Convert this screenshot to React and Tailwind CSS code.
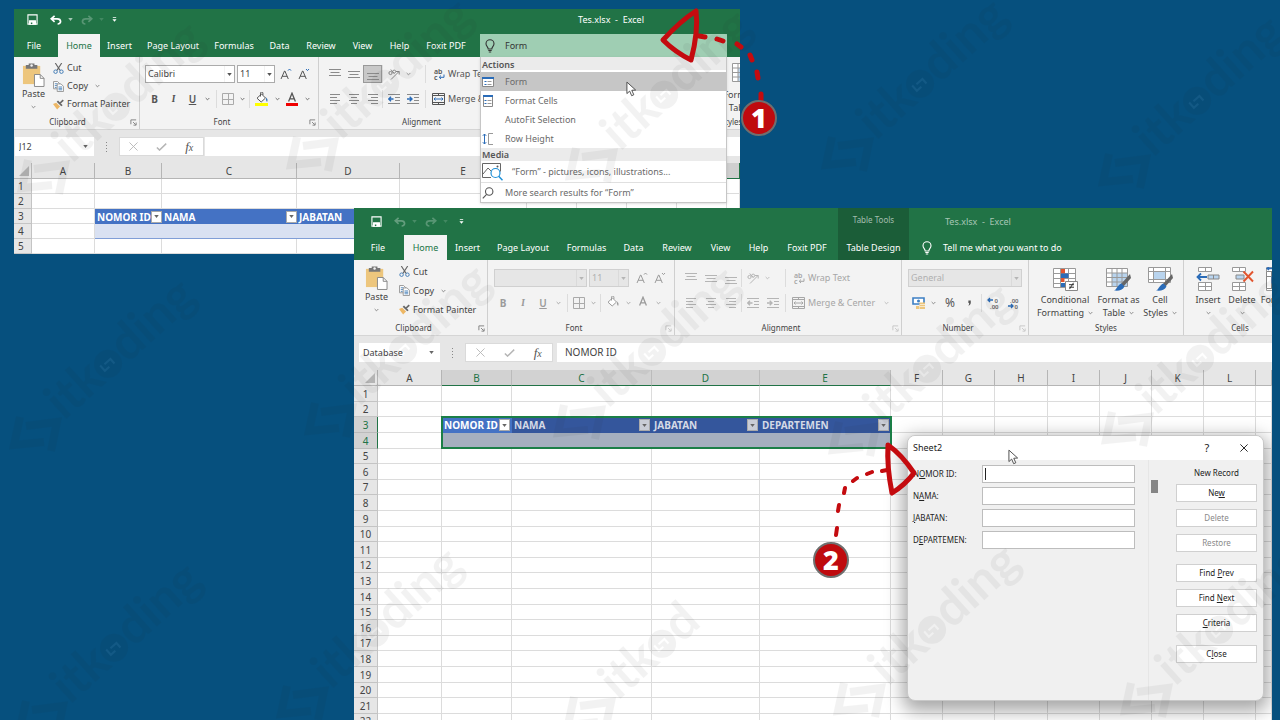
import clsx from "clsx";

/* ---------- small glyphs ---------- */

function Caret({ className = "text-[#666]" }) {
  return (
    <svg viewBox="0 0 6 4" className={clsx("w-[5px] h-[3px] shrink-0", className)}>
      <path d="M0 0h6L3 4z" fill="currentColor" />
    </svg>
  );
}

function Chevron({ className = "text-[#777]" }) {
  return (
    <svg viewBox="0 0 6 4" className={clsx("w-[5px] h-1 shrink-0", className)} fill="none" stroke="currentColor">
      <path d="M.8.8L3 3 5.2.8" />
    </svg>
  );
}

function Launcher({ className }) {
  return (
    <svg viewBox="0 0 8 8" className={clsx("w-[7px] h-[7px]", className)} fill="none" stroke="currentColor">
      <path d="M1 6V1h6M3.5 3.5l3 3M7 4v3H4" />
    </svg>
  );
}

function SaveIcon() {
  return (
    <svg viewBox="0 0 12 12" className="w-[11px] h-[11px]" fill="none" stroke="currentColor" strokeWidth="1.2">
      <path d="M1 1h10v10H1z" />
      <path d="M2.8 7.5h6.4V11H2.8z" fill="currentColor" />
      <path d="M5 9.3v1.7" stroke="#217346" strokeWidth="1.6" />
    </svg>
  );
}

function UndoIcon({ className, flip }) {
  return (
    <svg
      viewBox="0 0 12 10"
      className={clsx("w-3 h-2.5", flip && "-scale-x-100", className)}
      fill="none"
      stroke="currentColor"
      strokeWidth="1.7"
    >
      <path d="M4.6.8L1.2 3.8l3.4 3M1.4 3.8h5.8c4.4 0 4.4 5.2.4 5.2" />
    </svg>
  );
}

function CustomizeIcon() {
  return (
    <svg viewBox="0 0 6 6" className="w-[5px] h-[5px]" fill="currentColor">
      <path d="M1 0h4v1H1zM.5 2.6h5L3 5.6z" />
    </svg>
  );
}

function BulbIcon({ className }) {
  return (
    <svg viewBox="0 0 10 14" className={clsx("w-[10px] h-[14px]", className)} fill="none" stroke="currentColor" strokeWidth="1.1">
      <path d="M3.2 10C3.2 8 1 7.2 1 4.7a4 4 0 018 0C9 7.2 6.8 8 6.8 10zM3.3 11.5h3.4M3.8 13h2.4" />
    </svg>
  );
}

function PasteIcon() {
  return (
    <svg viewBox="0 0 24 26" className="w-[23px] h-[25px]">
      <path d="M1 4h18v19H1z" fill="#edc67d" />
      <path d="M4 3h3V1.5h6V3h3v4H4z" fill="#777" />
      <circle cx="10" cy="3.5" r="1.3" fill="#f3f3f3" />
      <path d="M13 13h6l4 4v8.500H13z" fill="#fff" stroke="#888" />
      <path d="M19 13v4h4" fill="none" stroke="#888" />
    </svg>
  );
}

function CutIcon() {
  return (
    <svg viewBox="0 0 12 12" className="w-[11px] h-[11px]" fill="none">
      <path d="M2.5 0l5.2 8M9.500 0L4.300 8" stroke="#666" strokeWidth="1.2" />
      <circle cx="2.800" cy="9.500" r="1.900" stroke="#3c78b4" />
      <circle cx="9.200" cy="9.500" r="1.900" stroke="#3c78b4" />
    </svg>
  );
}

function CopyIcon() {
  return (
    <svg viewBox="0 0 12 12" className="w-[11px] h-[11px]" fill="#fff" stroke="#888" strokeWidth=".9">
      <path d="M.6.600h4.400l2 2V8.500H.6z" />
      <path d="M2 3h3M2 5h3M2 7h2" stroke="#3c78b4" />
      <path d="M4.600 3.200h4.200l2.600 2.600v5.700H4.600z" />
      <path d="M6 6.500h4M6 8h4M6 9.600h4" stroke="#3c78b4" />
    </svg>
  );
}

function PainterIcon() {
  return (
    <svg viewBox="0 0 12 12" className="w-[11px] h-[11px]">
      <path d="M0 5.500L3.500 4l4.200 4.200L4.500 11.500z" fill="#edb765" />
      <path d="M4 3l1.500-1.300 5 5L9 8z" fill="#666" />
      <path d="M7 4l3.500-3.500 1.300 1.300L8.500 5z" fill="#666" />
    </svg>
  );
}

function FontStep({ down, live }) {
  return (
    <svg viewBox="0 0 12 12" className="w-3 h-3" fill="none" stroke="currentColor">
      <path d="M1 11L4.500 3h.4L8.300 11M2.200 8.300h5" />
      <path d={down ? "M8 1l1.500 1.600L11 1" : "M8 2.600L9.500 1 11 2.600"} stroke={live ? "#2b6cb8" : "currentColor"} />
    </svg>
  );
}

function BordersIcon() {
  return (
    <svg viewBox="0 0 12 12" className="w-3 h-3" fill="none" stroke="currentColor">
      <path d="M.5.500h11v11H.5zM6.500.5v11M.5 6.500h11" />
    </svg>
  );
}

function BucketIcon({ live }) {
  return (
    <svg viewBox="0 0 14 14" className="w-3.5 h-3.5" fill="none" stroke="currentColor">
      <path d="M2 6.200L6.500 2l4 4-4.300 4z" fill="#fff" />
      <path d="M5.500 4.500V1.200a1.200 1.200 0 012.400 0V3" />
      <path d="M11 5.500c2 1.500 1.800 3 1 4.500-1-1.200-1.400-2.500-1-4.500z" fill={live ? "#3c78b4" : "currentColor"} stroke="none" />
      {live && <path d="M0 11h13v3H0z" fill="#ff0" stroke="none" />}
    </svg>
  );
}

function FontColorIcon({ live }) {
  return (
    <svg viewBox="0 0 14 14" className="w-3.5 h-3.5" fill="none" stroke="currentColor" strokeWidth="1.300">
      <path d="M3.600 9.500L7 1.200l3.400 8.300M4.800 6.800h4.400" />
      {live && <path d="M1 11h12v3H1z" fill="#f00000" stroke="none" />}
    </svg>
  );
}

const linePaths = {
  top: "M0 1.500h12M1.500 4.500h9M0 7.500h12",
  middle: "M0 3.500h12M1.500 6.500h9M0 9.500h12",
  bottom: "M0 5.500h12M1.500 8.500h9M0 11.500h12",
  left: "M1 1.500h10M1 4.500h7M1 7.500h10M1 10.500h7",
  center: "M1 1.500h10M3 4.500h6M1 7.500h10M3 10.500h6",
  right: "M1 1.500h10M4 4.500h7M1 7.500h10M4 10.500h7",
};

function LinesIcon({ kind }) {
  return (
    <svg viewBox="0 0 12 12" className="w-3 h-3" fill="none" stroke="currentColor">
      <path d={linePaths[kind]} />
    </svg>
  );
}

function IndentIcon({ out, live }) {
  return (
    <svg viewBox="0 0 12 12" className="w-3 h-3" fill="none" stroke="currentColor">
      <path d="M0 1.500h12M7 4.500h5M7 7.500h5M0 10.500h12" />
      <path
        d={out ? "M5.500 6H.8M3 3.700L.8 6 3 8.200" : "M0 6h4.800M2.700 3.700L5 6 2.700 8.200"}
        stroke={live ? "#2b6cb8" : "currentColor"}
        strokeWidth="1.400"
      />
    </svg>
  );
}

function OrientationIcon() {
  return (
    <svg viewBox="0 0 12 12" className="w-3 h-3" fill="none" stroke="currentColor">
      <circle cx="2.500" cy="5" r="1.600" />
      <path d="M2.800 1.500l3.400 4" />
      <circle cx="6.200" cy="3.600" r="1.500" />
      <path d="M3 11.500l8-8M8 3.500h3.200v3" />
    </svg>
  );
}

function WrapIcon({ live }) {
  return (
    <svg viewBox="0 0 12 12" className="w-3 h-3" fill="none" stroke="currentColor">
      <text x="1" y="5.500" fontSize="7" fontWeight="600" fill="currentColor" stroke="none">ab</text>
      <text x="1" y="11.500" fontSize="7" fontWeight="600" fill="currentColor" stroke="none">c</text>
      <path d="M11 6.500v2.800H6.500M8 7.500L6.200 9.300 8 11" stroke={live ? "#2b6cb8" : "currentColor"} />
    </svg>
  );
}

function MergeIcon({ live }) {
  return (
    <svg viewBox="0 0 13 12" className="w-[13px] h-3" fill="none" stroke="currentColor">
      <path d="M.5.500h12v11H.5zM.5 2.500h12M.5 9.500h12M6.500.500v2M6.500 9.500v2" />
      <path d="M2 6h9M3.500 4.500L2 6l1.500 1.500M9.500 4.500L11 6 9.500 7.500" stroke={live ? "#2b6cb8" : "currentColor"} />
    </svg>
  );
}

function CurrencyIcon() {
  return (
    <svg viewBox="0 0 14 12" className="w-3.5 h-3">
      <path d="M1 1h11v6H1z" fill="#fff" stroke="#3d7fc4" strokeWidth="1.600" />
      <circle cx="6.500" cy="4" r="1.500" fill="#3d7fc4" />
      <path d="M7.500 5.500h5.500V12H7.500zM4 9h3v3H4z" fill="#edc67d" />
      <path d="M7.500 7.500H13M7.500 9.500H13" stroke="#fff" strokeWidth=".6" />
    </svg>
  );
}

function CommaIcon() {
  return (
    <svg viewBox="0 0 4 7" className="w-[3px] h-1.5" fill="#555">
      <path d="M.5 0h3.200v3C3.700 5 2.500 6.300.6 7 1.500 5.500 1.500 4.500 1.500 3.500H.5z" />
    </svg>
  );
}

function DecimalIcon({ up }) {
  return (
    <svg viewBox="0 0 13 12" className="w-[13px] h-3" fill="none">
      <text x={up ? 7.5 : 3} y="5.500" fontSize="6" fontWeight="600" fill="#666">{up ? "0" : ".00"}</text>
      <text x={up ? 3 : 7.5} y="11.500" fontSize="6" fontWeight="600" fill="#666">{up ? ".00" : "0"}</text>
      <path d={up ? "M6 3H1M3 1L1 3l2 2" : "M1 9h5M4 7l2 2-2 2"} stroke="#2b6cb8" strokeWidth="1.300" />
    </svg>
  );
}

function ConditionalIcon() {
  return (
    <svg viewBox="0 0 25 24" className="w-[25px] h-6" fill="none">
      <path d="M.5 1.500h22v19H.5z" fill="#fff" stroke="#999" />
      <path d="M7.500 1.500v19M15.500 1.500v19M.5 6.500h22M.5 11.500h22M.5 16.500h22" stroke="#999" />
      <path d="M8 2h4v4.500H8zM8 11h3.500v4H8z" fill="#e2552f" />
      <path d="M8 6.500h7.500V11H8zM8 16h4v4H8z" fill="#2b6cb8" />
      <path d="M12.500 14.500h12v9h-12z" fill="#fff" stroke="#888" />
      <path d="M16 17.700h5M16 20.200h5M20.500 15.800l-4 6.300" stroke="#333" />
    </svg>
  );
}

function TableStyleIcon({ cell }) {
  return (
    <svg viewBox="0 0 25 24" className="w-[25px] h-6" fill="none">
      <path d={cell ? "M.5.500h22v15H.5z" : "M.5 1.500h21v18H.5z"} fill="#fff" />
      {cell ? <path d="M5.500 4.500h12v8h-12z" fill="#b9d4ee" /> : <path d="M6 6h15.500v13.500H6z" fill="#b9d4ee" />}
      <path
        d={
          cell
            ? "M.5.500h22v15H.5zM5.500.500v15M17.500.500v15M.5 4.500h22M.5 12.500h22"
            : "M.5 1.500h21v18H.5zM6 1.500v18M11 1.500v18M16 1.500v18M.5 6h21M.5 10.500h21M.5 15h21"
        }
        stroke="#999"
      />
      <path d="M24 7l-9 10 2.500 2.500L25 11z" fill="#666" />
      <path d="M15.500 16.500l3 3c-2 4-6 4.500-10.500 4 3-1 3.500-6 7.500-7z" fill="#2b6cb8" />
    </svg>
  );
}

function RowsIcon({ kind }) {
  return (
    <svg viewBox="0 0 24 24" className="w-6 h-6 shrink-0" fill="none">
      <path d="M2.500.500h13v4h-13zM9.500.5v4M2.500 15.500h13v8h-13zM9.500 15.500v8M2.500 19.500h13" fill="#fff" stroke="#999" />
      {kind === "insert" && (
        <>
          <path d="M12 8h11v4H12zM17.500 8v4" fill="#b9d4ee" stroke="#888" />
          <path d="M11 10H1.500M5 6.500L1.500 10 5 13.500" stroke="#2b6cb8" strokeWidth="1.800" />
        </>
      )}
      {kind === "delete" && (
        <>
          <path d="M6 8h8v4H6z" fill="#b9d4ee" stroke="#888" />
          <path d="M13.500 4.500l9.500 10M23 4.500l-9.500 10" stroke="#e2552f" strokeWidth="1.900" />
        </>
      )}
      {kind === "format" && (
        <>
          <path d="M2.500 4.500h20v17h-20zM7.500 4.500v17M2.500 9.500h20" fill="#fff" stroke="#888" />
          <path d="M7.500 9.500h9v7h-9z" fill="#2b6cb8" />
          <path d="M3 1.500h16M5 0L3 1.500 5 3" stroke="#2b6cb8" strokeWidth="1.300" />
        </>
      )}
    </svg>
  );
}

function FormIcon({ tall }) {
  return (
    <svg viewBox="0 0 12 12" className="w-3 h-3" fill="none">
      <path d={tall ? "M1.500.5h9v11h-9z" : "M.5 1.500h11v9H.5z"} fill="#fff" stroke="#888" />
      <path d={tall ? "M1 0h10v2H1z" : "M0 1h12v2H0z"} fill="#2b6cb8" />
      <path d="M2.500 5.500h2M2.500 8.500h2" stroke="#2b6cb8" />
      <path d="M5.500 5.500h4M5.500 8.500h4" stroke="#999" />
    </svg>
  );
}

function RowHeightIcon() {
  return (
    <svg viewBox="0 0 12 12" className="w-3 h-3" fill="none">
      <path d="M2.500 1v10M.8 2.800L2.500 1l1.700 1.800M.8 9.200L2.500 11l1.700-1.800" stroke="#2b6cb8" />
      <path d="M11 .5H6.500v11H11" stroke="#999" />
    </svg>
  );
}

function MediaIcon() {
  return (
    <svg viewBox="0 0 21 19" className="w-[21px] h-[19px]" fill="none">
      <path d="M9 15.500H.5V1.500h18v8" stroke="#666" />
      <path d="M1 12l5-6 4 4" stroke="#666" />
      <circle cx="15.500" cy="4.500" r="1" fill="#555" />
      <circle cx="13.500" cy="11" r="4.500" fill="#fff" stroke="#1e90d8" strokeWidth="1.200" />
      <path d="M16.700 14.200l3.800 4" stroke="#1e90d8" strokeWidth="1.500" />
    </svg>
  );
}

function SearchIcon() {
  return (
    <svg viewBox="0 0 12 12" className="w-3 h-3" fill="none" stroke="#555" strokeWidth="1.100">
      <circle cx="7.200" cy="4.500" r="3.700" />
      <path d="M4.600 7.300L.8 11.300" />
    </svg>
  );
}

function Pointer({ className }) {
  return (
    <svg viewBox="0 0 12 17" className={clsx("absolute w-[11px] h-4 pointer-events-none", className)}>
      <path d="M1 1v12.500l3-2.700 2.200 5 2.300-1-2.200-4.900 4.200-.300z" fill="#fff" stroke="#444" />
    </svg>
  );
}

/* ---------- title bar ---------- */

const tabs = [
  { name: "File", small: "w-11 pr-1", large: "w-[50px] pr-0.5" },
  { name: "Home", small: "w-[42px]", large: "w-[43px]", active: true },
  { name: "Insert", small: "w-[39px]", large: "w-[41px]" },
  { name: "Page Layout", small: "w-[68px]", large: "w-[70px]" },
  { name: "Formulas", small: "w-[54px]", large: "w-[57px]" },
  { name: "Data", small: "w-[37px]", large: "w-[37px]" },
  { name: "Review", small: "w-[46px]", large: "w-[50px]" },
  { name: "View", small: "w-[37px]", large: "w-[37px]" },
  { name: "Help", small: "w-[37px]", large: "w-[39px]" },
  { name: "Foxit PDF", small: "w-[62px] pr-1.5", large: "w-[60px] pr-0.5" },
];

function QuickAccess({ live }) {
  return (
    <div className={clsx("flex items-center text-white", live ? "pl-[13px]" : "pl-[17px]")}>
      <button aria-label="Save"><SaveIcon /></button>
      <button aria-label="Undo" className={clsx("flex items-center gap-1.5 ml-3", !live && "text-white/30")}>
        <UndoIcon /><Caret className="text-current opacity-60" />
      </button>
      <button aria-label="Redo" className="flex items-center gap-1.5 ml-2 text-white/25">
        <UndoIcon flip /><Caret className="text-current opacity-60" />
      </button>
      <button aria-label="Customize" className={live ? "ml-2" : "ml-[11px]"}><CustomizeIcon /></button>
    </div>
  );
}

function TabList({ live }) {
  return tabs.map((tab) => (
    <button
      key={tab.name}
      className={clsx(
        "shrink-0 text-center whitespace-nowrap",
        live ? tab.small : tab.large,
        tab.active ? "bg-[#f3f3f3] text-[#217346]" : "text-white"
      )}
    >
      {tab.name}
    </button>
  ));
}

/* ---------- ribbon ---------- */

function Group({ label, className, labelClass, launcher = true, live, children }) {
  return (
    <section className={clsx("relative shrink-0 flex flex-col border-r border-[#cfcfcf]", className)}>
      <div className="flex-1">{children}</div>
      <h3 className={clsx("text-center text-[8px] leading-[14px] text-[#444]", labelClass)}>{label}</h3>
      {launcher && (
        <button aria-label={label + " settings"} className="absolute right-0.5 bottom-[3px]">
          <Launcher className={live ? "text-[#777]" : "text-[#c4c4c4]"} />
        </button>
      )}
    </section>
  );
}

function Tool({ label, className, children }) {
  return (
    <button aria-label={label} className={clsx("h-[18px] flex items-center justify-center shrink-0", className)}>
      {children}
    </button>
  );
}

function Combo({ label, value, live, className }) {
  return (
    <div
      className={clsx(
        "h-[18px] flex items-center border text-[9px]",
        live ? "bg-white border-[#ababab] text-[#444]" : "bg-[#e6e6e6] border-[#d0d0d0] text-[#b0b0b0]",
        className
      )}
    >
      <select aria-label={label} className="appearance-none flex-1 min-w-0 h-full pl-0.5 outline-none">
        <option>{value}</option>
      </select>
      <span className="h-full w-[10px] flex items-center justify-center border-l border-black/5">
        <Caret className={live ? "text-[#555]" : "text-[#b5b5b5]"} />
      </span>
    </div>
  );
}

function Rule({ className }) {
  return <span className={clsx("w-px h-[18px] bg-[#dcdcdc] shrink-0", className)} />;
}

function ClipboardGroup({ live }) {
  const row = clsx("flex items-center gap-[3px]", live ? "h-[18px]" : "h-[19px]");
  return (
    <Group
      label="Clipboard"
      live
      className={live ? "w-[126px] pt-0.5" : "w-[134px] pt-0.5"}
      labelClass={live ? "pr-[18px]" : "pr-3.5"}
    >
      <div className="flex">
        <button className={clsx("flex flex-col items-center pt-[3px]", live ? "w-[39px]" : "w-[45px]")}>
          <PasteIcon />
          <span className="leading-[14px]">Paste</span>
          <Chevron className="text-[#777] mt-1" />
        </button>
        <div>
          <button className={row}><CutIcon />Cut</button>
          <button className={row}><CopyIcon />Copy <Chevron className="text-[#777] ml-1" /></button>
          <button className={row}><PainterIcon />Format Painter</button>
        </div>
      </div>
    </Group>
  );
}

function FontGroup({ live }) {
  const cell = live ? "w-[19px]" : "w-5";
  const step = "w-[18px]";
  const ink = live ? "text-[#555]" : "text-[#9b9b9b]";
  return (
    <Group label="Font" live={live} className={live ? "w-[179px] pt-2" : "w-[187px] pt-[9px]"} labelClass="pr-3.5">
      <div className={clsx("flex gap-0.5", ink, live ? "pl-[5px]" : "pl-1.5")}>
        <Combo label="Font name" value={live ? "Calibri" : ""} live={live} className={live ? "w-[90px]" : "w-[93px]"} />
        <Combo label="Font size" value="11" live={live} className={live ? "w-[38px]" : "w-10"} />
        <div className={clsx("flex", !live && "pl-0.5")}>
          <Tool label="Grow font" className={step}><FontStep live={live} /></Tool>
          <Tool label="Shrink font" className={step}><FontStep down live={live} /></Tool>
        </div>
      </div>
      <div className={clsx("flex items-center mt-[7px] text-[10px]", ink, live ? "pl-[5px]" : "pl-[5px]")}>
        <Tool label="Bold" className={clsx(cell, "font-bold")}>B</Tool>
        <Tool label="Italic" className={clsx(cell, "italic font-serif font-bold")}>I</Tool>
        <Tool label="Underline" className={clsx(cell, "underline font-semibold")}>U</Tool>
        <Tool label="Underline styles" className="w-2.5"><Chevron className="text-current" /></Tool>
        <Rule className="ml-1" />
        <Tool label="Borders" className="w-[22px] text-[#aaa]"><BordersIcon /></Tool>
        <Tool label="Border styles" className="w-1.5"><Chevron className="text-current" /></Tool>
        <Rule className="ml-1" />
        <Tool label="Fill color" className="w-6"><BucketIcon live={live} /></Tool>
        <Tool label="Fill colors" className="w-1.5"><Chevron className="text-current" /></Tool>
        <Tool label="Font color" className="w-6"><FontColorIcon live={live} /></Tool>
        <Tool label="Font colors" className="w-1.5"><Chevron className="text-current" /></Tool>
      </div>
    </Group>
  );
}

function AlignmentGroup({ live }) {
  const cell = live ? "w-[19px]" : "w-5";
  const ink = live ? "text-[#8a8a8a]" : "text-[#b5b5b5]";
  const wide = live ? "text-[#555]" : "text-[#a6a6a6]";
  return (
    <Group label="Alignment" live={live} className={live ? "w-[240px] pt-2" : "w-[227px] pt-[9px]"} labelClass={live ? "pr-[34px]" : "pr-3.5"}>
      <div className={clsx("flex items-center pl-1.5", ink)}>
        <Tool label="Top align" className={cell}><LinesIcon kind="top" /></Tool>
        <Tool label="Middle align" className={cell}><LinesIcon kind="middle" /></Tool>
        <Tool label="Bottom align" className={clsx(cell, live && "bg-[#c8c8c8] border border-[#999]")}><LinesIcon kind="bottom" /></Tool>
        <Rule />
        <Tool label="Orientation" className="w-[22px]"><OrientationIcon /></Tool>
        <Tool label="Orientation menu" className="w-1.5"><Chevron className="text-current" /></Tool>
        <span className={live ? "w-[14px]" : "w-[15px]"} />
        <Rule />
        <Tool label="Wrap text" className={clsx("gap-[3px] whitespace-nowrap ml-[7px]", wide)}><WrapIcon live={live} />Wrap Text</Tool>
      </div>
      <div className={clsx("flex items-center mt-[7px] pl-1.5", ink)}>
        <Tool label="Align left" className={cell}><LinesIcon kind="left" /></Tool>
        <Tool label="Center" className={cell}><LinesIcon kind="center" /></Tool>
        <Tool label="Align right" className={cell}><LinesIcon kind="right" /></Tool>
        <Rule />
        <Tool label="Decrease indent" className="w-[22px]"><IndentIcon out live={live} /></Tool>
        <Tool label="Increase indent" className={live ? "w-4" : "w-[17px]"}><IndentIcon live={live} /></Tool>
        <span className="w-1" />
        <Rule />
        <Tool label="Merge and center" className={clsx("gap-[3px] whitespace-nowrap ml-1.5", wide)}>
          <MergeIcon live={live} />Merge &amp; Center
        </Tool>
        <Tool label="Merge menu" className="w-[22px]"><Chevron className="text-current" /></Tool>
      </div>
    </Group>
  );
}

function NumberGroup() {
  return (
    <Group label="Number" className="w-[127px] pt-[9px]" labelClass="pr-3.5">
      <Combo label="Number format" value="General" className="ml-1.5 w-[114px]" />
      <div className="flex items-center mt-[7px] pl-[9px] text-[#555]">
        <Tool label="Currency" className="w-4"><CurrencyIcon /></Tool>
        <Tool label="Currency menu" className="w-3"><Chevron /></Tool>
        <Tool label="Percent" className="w-[22px] text-[12px]">%</Tool>
        <Tool label="Comma style" className="w-4"><CommaIcon /></Tool>
        <span className="w-1" />
        <Rule />
        <Tool label="Increase decimal" className="w-[22px]"><DecimalIcon up /></Tool>
        <Tool label="Decrease decimal" className="w-[18px]"><DecimalIcon /></Tool>
      </div>
    </Group>
  );
}

function BigTool({ icon, lines, className }) {
  return (
    <button className={clsx("flex flex-col items-center leading-[13px] whitespace-nowrap shrink-0", className)}>
      {icon}
      <span className="mt-0.5">{lines[0]}</span>
      <span className="flex items-center gap-1 h-[13px]">{lines[1]} <Chevron /></span>
    </button>
  );
}

function StylesGroup() {
  return (
    <Group label="Styles" className="w-[155px] pt-[7px]" launcher={false}>
      <div className="flex pl-2">
        <BigTool icon={<ConditionalIcon />} lines={["Conditional", "Formatting"]} className="w-[56px]" />
        <BigTool icon={<TableStyleIcon />} lines={["Format as", "Table"]} className="w-[51px]" />
        <BigTool icon={<TableStyleIcon cell />} lines={["Cell", "Styles"]} className="w-8" />
      </div>
    </Group>
  );
}

function CellsGroup() {
  return (
    <Group label="Cells" className="w-[117px] pt-[7px]" labelClass="pr-1" launcher={false}>
      <div className="flex pl-1.5">
        <BigTool icon={<RowsIcon kind="insert" />} lines={["Insert"]} className="w-9" />
        <BigTool icon={<RowsIcon kind="delete" />} lines={["Delete"]} className="w-8" />
        <BigTool icon={<RowsIcon kind="format" />} lines={["Format"]} className="w-9" />
      </div>
    </Group>
  );
}

/* ---------- formula bar ---------- */

function FormulaBar({ name, value, live }) {
  return (
    <div className={clsx("flex bg-[#e6e6e6] border-t border-[#d5d5d5]", live ? "pt-[7px] pb-[7px] pl-px" : "pt-[7px] pb-2 pl-[5px]")}>
      <div className={clsx("flex items-center bg-white pr-1.5 h-[19px]", live ? "w-[79px]" : "w-[81px]")}>
        <input
          aria-label="Name box"
          defaultValue={name}
          className="flex-1 min-w-0 pl-1 text-[9px] text-[#444] outline-none"
        />
        <Caret />
      </div>
      <span className="w-[25px] flex flex-col items-center justify-center gap-0.5">
        <i className="w-px h-px bg-[#888]" />
        <i className="w-px h-px bg-[#888]" />
        <i className="w-px h-px bg-[#888]" />
        <i className="w-px h-px bg-[#888]" />
      </span>
      <div className={clsx("flex items-center bg-white border border-[#dadada]", live ? "w-[85px]" : "w-[88px]")}>
        <button aria-label="Cancel" className="flex-1 flex justify-center">
          <svg viewBox="0 0 10 10" className="w-[9px] h-[9px]" stroke="#b5b5b5"><path d="M.5.500l9 9M9.500.500l-9 9" /></svg>
        </button>
        <button aria-label="Enter" className="flex-1 flex justify-center">
          <svg viewBox="0 0 12 9" className="w-[11px] h-2" fill="none" stroke="#b5b5b5" strokeWidth="1.600"><path d="M.8 5l3 3 7.500-7.300" /></svg>
        </button>
        <button aria-label="Insert function" className="flex-1 font-['Liberation_Serif',serif] italic text-[13px] leading-none text-[#555]">
          f<span className="text-[10px]">x</span>
        </button>
      </div>
      <input
        aria-label="Formula"
        defaultValue={value}
        className={clsx("flex-1 min-w-0 pl-2 bg-white text-[10px] text-[#444] outline-none", live ? "ml-px" : "ml-1")}
      />
    </div>
  );
}

/* ---------- sheets ---------- */

function FilterButton({ label, dim }) {
  return (
    <button
      aria-label={"Filter " + label}
      className={clsx("w-[11px] h-3 shrink-0 flex items-center justify-center border border-[#aaa]", dim ? "bg-[#c9cdd6]" : "bg-white")}
    >
      <Caret />
    </button>
  );
}

function Corner() {
  return (
    <svg viewBox="0 0 10 10" className="w-2.5 h-2.5 ml-auto mr-0.5"><path d="M10 0v10H0z" fill="#b4b4b4" /></svg>
  );
}

const titles = ["NOMOR ID", "NAMA", "JABATAN", "DEPARTEMEN"];

// columns past E sit under the search menu, so they carry no letter here
const backColumns = [
  ["A", "w-[63px]"],
  ["B", "w-[67px]"],
  ["C", "w-[135px]"],
  ["D", "w-[103px]"],
  ["E", "w-[127px]"],
  ["", "w-[50px]"],
  ["", "w-[50px]"],
  ["", "w-[50px]"],
  ["", "w-[50px]"],
  ["", ""],
];

function BackSheet() {
  return (
    <table className="w-full table-fixed border-separate border-spacing-0 bg-white text-[10px] leading-[14px] text-[#444]">
      <thead>
        <tr className="h-4 bg-[#e6e6e6]">
          <th className="w-[18px] p-0 border-r border-b border-[#b5b5b5]"><Corner /></th>
          {backColumns.map(([name, width], i) => (
            <th
              key={i}
              className={clsx(
                "p-0 font-normal border-r border-b",
                width,
                width ? "border-[#b5b5b5]" : "bg-[#cfcfcf] border-[#217346]"
              )}
            >
              {name}
            </th>
          ))}
        </tr>
      </thead>
      <tbody>
        {[1, 2, 3, 4, 5].map((n) => (
          <tr key={n} className="h-[15px]">
            <th className="p-0 pl-1 text-left font-normal bg-[#e6e6e6] border-r border-b border-[#c4c4c4]">{n}</th>
            {backColumns.map((_, i) => {
              const inTable = i >= 1 && i <= 4;
              if (n === 3 && inTable) {
                return (
                  <td key={i} className="p-0 bg-[#4472c4] text-white font-bold whitespace-nowrap">
                    <div className="flex items-center justify-between pl-0.5">
                      {titles[i - 1]}
                      <FilterButton label={titles[i - 1]} />
                    </div>
                  </td>
                );
              }
              if (n === 4 && inTable) {
                return <td key={i} className="p-0 bg-[#d9e1f2] border-b border-[#4472c4]/60" />;
              }
              return <td key={i} className="border-r border-b border-[#dcdcdc] p-0" />;
            })}
          </tr>
        ))}
      </tbody>
    </table>
  );
}

const frontColumns = [
  ["A", "w-16"],
  ["B", "w-[70px]"],
  ["C", "w-[140px]"],
  ["D", "w-[108px]"],
  ["E", "w-[131px]"],
  ["F", "w-[52px]"],
  ["G", "w-[52px]"],
  ["H", "w-[53px]"],
  ["I", "w-[52px]"],
  ["J", "w-[52px]"],
  ["K", "w-[52px]"],
  ["L", "w-[52px]"],
  ["", ""],
];

function FrontSheet() {
  const rows = Array.from({ length: 22 }, (_, i) => i + 1);
  return (
    <table className="w-full table-fixed border-separate border-spacing-0 bg-white text-[10px] leading-[14px] text-[#444]">
      <thead>
        <tr className="h-4 bg-[#e6e6e6]">
          <th className="w-6 p-0 border-r border-b border-[#b5b5b5]"><Corner /></th>
          {frontColumns.map(([name, width], i) => (
            <th
              key={name}
              className={clsx(
                "p-0 font-normal border-r border-b",
                width,
                i >= 1 && i <= 4 ? "bg-[#d2d2d2] text-[#217346] border-r-[#bbb] border-b-[#217346]" : "border-[#b5b5b5]"
              )}
            >
              {name}
            </th>
          ))}
        </tr>
      </thead>
      <tbody>
        {rows.map((n) => (
          <tr key={n} className={n % 5 === 2 || n % 5 === 0 ? "h-[15px]" : "h-4"}>
            <th
              className={clsx(
                "p-0 text-center font-normal border-r border-b",
                n === 3 || n === 4 ? "bg-[#d2d2d2] text-[#217346] border-b-[#bbb] border-r-[#217346]" : "bg-[#e6e6e6] border-[#c4c4c4]"
              )}
            >
              {n}
            </th>
            {frontColumns.map(([name], i) => {
              const inTable = i >= 1 && i <= 4;
              if (n === 3 && inTable) {
                return (
                  <td
                    key={name}
                    className={clsx("p-0 font-bold whitespace-nowrap", i === 1 ? "relative bg-[#4472c4] text-white" : "bg-[#34569c] text-[#d5dae6]")}
                  >
                    <div className="flex items-center justify-between pl-0.5 pr-0.5">
                      {titles[i - 1]}
                      <FilterButton label={titles[i - 1]} dim={i > 1} />
                    </div>
                    {i === 1 && (
                      <span className="absolute -left-px -top-px w-[451px] h-[33px] border-2 border-[#1b7f47] pointer-events-none" />
                    )}
                  </td>
                );
              }
              if (n === 4 && inTable) return <td key={name} className="p-0 bg-[#a5afbf]" />;
              return <td key={name} className="p-0 border-r border-b border-[#dcdcdc]" />;
            })}
          </tr>
        ))}
      </tbody>
    </table>
  );
}

/* ---------- tell me menu ---------- */

function TellMeMenu() {
  const head = "bg-[#ebebeb] text-[#555] font-semibold h-[13px] leading-[13px] pl-px text-[9px]";
  const item = "w-full flex items-center text-left pl-px h-[19px]";
  return (
    <div className="absolute z-10 left-0 top-full w-full bg-white border border-[#c6c6c6] border-t-0 text-[#6a6a6a] shadow-sm">
      <h4 className={clsx(head, "pt-px")}>Actions</h4>
      <div className="h-0.5" />
      <button className={clsx(item, "bg-[#c6c6c6]")}><span className="w-[23px]"><FormIcon /></span>Form</button>
      <button className={item}><span className="w-[23px]"><FormIcon tall /></span>Format Cells</button>
      <button className={item}><span className="w-[23px]" />AutoFit Selection</button>
      <button className={item}><span className="w-[23px]"><RowHeightIcon /></span>Row Height</button>
      <h4 className={head}>Media</h4>
      <button className="w-full flex items-center text-left pl-px gap-[9px] h-[22px] border-b border-[#e0e0e0]">
        <MediaIcon />“Form” - pictures, icons, illustrations...
      </button>
      <button className="w-full flex items-center text-left pl-px h-[19px]">
        <span className="w-[23px]"><SearchIcon /></span>More search results for “Form”
      </button>
      <Pointer className="left-[145px] top-6" />
    </div>
  );
}

/* ---------- windows ---------- */

function BackWindow() {
  return (
    <div className="absolute isolate left-3.5 top-[9px] w-[726px] h-[245px] overflow-hidden bg-white">
      <header className="bg-[#217346] text-white">
        <div className="flex items-center h-[25px] pb-1">
          <QuickAccess live />
          <span className="ml-auto mr-24 whitespace-pre">Tes.xlsx  -  Excel</span>
        </div>
        <div className="flex h-[23px]">
          <TabList live />
          <div className="relative w-[247px] h-full flex items-center bg-[#9fceb3] text-[#333]">
            <BulbIcon className="ml-[5px]" />
            <input aria-label="Tell me" defaultValue="Form" className="flex-1 min-w-0 ml-[10px] outline-none" />
            <TellMeMenu />
          </div>
        </div>
      </header>
      <div className="flex h-[72px] bg-[#f3f3f3] text-[#444]">
        <ClipboardGroup live />
        <FontGroup live />
        <AlignmentGroup live />
        <Group label="Styles" className="w-[190px] pt-[5px]" labelClass="pl-[156px]" launcher={false}>
          <div className="flex pl-[160px]">
            <BigTool icon={<TableStyleIcon />} lines={["Format as", "Table"]} className="w-[51px]" />
          </div>
        </Group>
      </div>
      <FormulaBar name="J12" value="" live />
      <BackSheet />
    </div>
  );
}

function FrontWindow() {
  return (
    <div className="absolute isolate left-[354px] right-2 top-52 bottom-0 overflow-hidden bg-white">
      <header className="bg-[#217346] text-white">
        <div className="flex items-center h-[27px]">
          <div className="w-[484px]"><QuickAccess /></div>
          <span className="w-[71px] h-full pt-1 text-center text-[8px] leading-4 bg-[#1b5d38] text-white/60">Table Tools</span>
          <span className="ml-9 whitespace-pre text-white/60">Tes.xlsx  -  Excel</span>
        </div>
        <div className="flex h-[25px]">
          <TabList />
          <button className="w-[71px] shrink-0 bg-[#1b5d38]">Table Design</button>
          <button className="flex items-center gap-[11px] ml-[13px] whitespace-nowrap"><BulbIcon />Tell me what you want to do</button>
        </div>
      </header>
      <div className="flex h-[75px] bg-[#f3f3f3] text-[#444]">
        <ClipboardGroup />
        <FontGroup />
        <AlignmentGroup />
        <NumberGroup />
        <StylesGroup />
        <CellsGroup />
      </div>
      <FormulaBar name="Database" value="NOMOR ID" />
      <FrontSheet />
      <FormDialog />
    </div>
  );
}

/* ---------- data form dialog ---------- */

const fields = [
  { id: "nomor", pre: "N", key: "O", post: "MOR ID:" },
  { id: "nama", pre: "N", key: "A", post: "MA:" },
  { id: "jabatan", pre: "", key: "J", post: "ABATAN:" },
  { id: "departemen", pre: "D", key: "E", post: "PARTEMEN:" },
];

function DialogButton({ pre = "", hot, post = "", disabled, className }) {
  return (
    <button
      disabled={disabled}
      className={clsx("h-[18px] w-full bg-white border border-[#d0d0d0] text-[#222] disabled:text-[#8a8a8a]", className)}
    >
      {pre}<u>{hot}</u>{post}
    </button>
  );
}

function FormDialog() {
  return (
    <div
      role="dialog"
      aria-label="Sheet2"
      className="absolute right-2 top-[227px] w-[357px] h-[266px] flex flex-col rounded-lg overflow-hidden bg-[#f0f0f0] border border-[#c8c8c8] shadow-[0_6px_18px_4px_rgba(0,0,0,0.35)] text-[8px] text-[#222]"
    >
      <div className="flex items-center h-6 bg-white pl-[5px] text-[9px]">
        Sheet2
        <button aria-label="Help" className="ml-auto w-5 text-[11px]">?</button>
        <button aria-label="Close dialog" className="ml-[23px] mr-[15px]">
          <svg viewBox="0 0 10 10" className="w-2 h-2" stroke="#222" strokeWidth="1.200"><path d="M.5.500l9 9M9.500.500l-9 9" /></svg>
        </button>
      </div>
      <div className="flex flex-1">
        <div className="flex-1 pl-[5px] pt-1">
          {fields.map((field) => (
            <div key={field.id} className="flex items-center h-[22px] pb-0.5">
              <label htmlFor={field.id} className="w-[69px]">
                {field.pre}<u>{field.key}</u>{field.post}
              </label>
              <div className="w-[153px] h-[18px] shrink-0 flex items-center bg-white border border-[#bdbdbd]">
                {field.id === "nomor" && <i className="w-px h-3 ml-0.5 bg-[#222]" />}
                <input id={field.id} className="flex-1 min-w-0 outline-none" />
              </div>
            </div>
          ))}
        </div>
        <div className="w-[18px] border-l border-[#e6e6e6] pt-5 pl-0.5 mr-[10px]">
          <div className="w-[7px] h-[13px] bg-[#858585]" />
        </div>
        <div className="w-[81px] mr-1.5 pt-2 flex flex-col gap-[7px]">
          <p className="text-center leading-[10px] -mb-px">New Record</p>
          <DialogButton pre="Ne" hot="w" />
          <DialogButton pre="Delete" disabled />
          <DialogButton pre="Restore" disabled />
          <DialogButton pre="Find " hot="P" post="rev" className="mt-[5px]" />
          <DialogButton pre="Find " hot="N" post="ext" />
          <DialogButton hot="C" post="riteria" />
          <DialogButton pre="C" hot="l" post="ose" className="mt-1.5" />
        </div>
      </div>
      <Pointer className="left-[100px] top-[13px]" />
    </div>
  );
}

/* ---------- overlays ---------- */

const marks = [
  [36, 435], [42, 719], [331, 421], [303, 704], [44, 178], [313, 155], [848, 155], [1125, 172],
  [592, 166], [580, 423], [855, 440], [1128, 430], [860, 701], [1147, 701],
];

function Mark({ x, y, word = "itkoding" }) {
  return (
    <g transform={`translate(${x} ${y})`} fill="#222">
      <path d="M-16-18L-22 10l30-3M-10-9l31-4-6 29" fill="none" stroke="#222" strokeWidth="8" />
      <g transform="translate(28 -14) rotate(-42)">
        <text fontSize="50" fontWeight="700" fontFamily="Lato, sans-serif">{word}</text>
        <circle cx="71" cy="-13" r="14" />
        <path d="M64-17v7h6M68-15h8v6" fill="none" stroke="#fff" strokeWidth="2" />
      </g>
    </g>
  );
}

function Watermarks() {
  return (
    <svg className="absolute inset-0 w-full h-full pointer-events-none" aria-hidden="true">
      {marks.map(([x, y]) => (
        <g key={`${x}-${y}`} opacity="0.05"><Mark x={x} y={y} /></g>
      ))}
      <g opacity="0.05"><Mark x={590} y={715} word="itkod" /></g>
    </svg>
  );
}

function Arrows() {
  return (
    <svg className="absolute inset-0 w-full h-full pointer-events-none" fill="none" stroke="#c40b0f" strokeLinecap="round" strokeLinejoin="round">
      <path d="M663 40c10-11 22-22 33-29 2 16-1 34-5 49-10-5-20-12-28-20z" strokeWidth="5" />
      <path d="M699 36l6 1M717 39l6 2M737 44l4 3M750 55l2 5M757 72l1 6M761 94v6" strokeWidth="5" />
      <path d="M888 445c10 7 18 16 26 28-6 8-14 15-22 20-3-15-5-32-4-48z" strokeWidth="5" />
      <path d="M887 470l-5 1M872 472l-5 2M857 478l-4 3M845 488l-1 5M839 505l-1 6M837 528l-1 7" strokeWidth="4" />
    </svg>
  );
}

function Step({ n, className }) {
  return (
    <span
      className={clsx(
        "absolute w-9 h-9 rounded-full flex items-center justify-center bg-[#bf0a0e] border-2 border-[#6f6f6f] text-white font-['Open_Sans',sans-serif] font-extrabold text-[27px] leading-none pb-0.5",
        className
      )}
    >
      {n}
    </span>
  );
}

export default function App() {
  return (
    <main className="relative h-screen overflow-hidden bg-[#06507e] font-['Noto_Sans',sans-serif] text-[9px]">
      <BackWindow />
      <FrontWindow />
      <Watermarks />
      <Arrows />
      <Step n="1" className="left-[741px] top-[100px]" />
      <Step n="2" className="left-[813px] top-[542px]" />
    </main>
  );
}
